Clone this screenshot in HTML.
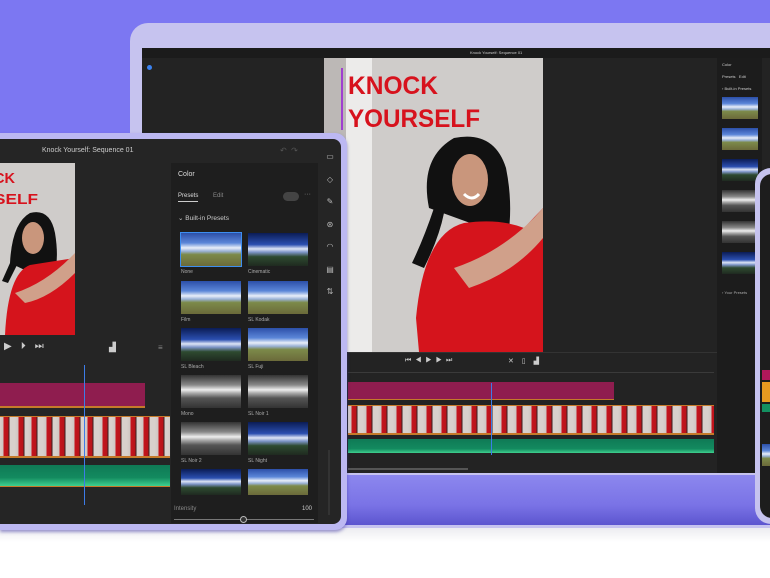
<!DOCTYPE html>
<html><head><meta charset="utf-8"><style>
*{margin:0;padding:0;box-sizing:border-box}
body{width:770px;height:578px;overflow:hidden;background:#fff;font-family:"Liberation Sans",sans-serif;position:relative}
.a{position:absolute}
.thumb{position:absolute;background:linear-gradient(#2c4fa8 0%,#5b86d8 30%,#e8eef8 45%,#9bb3d8 55%,#7c8a4a 65%,#6b6a3a 100%)}
.bw{background:linear-gradient(#333 0%,#888 30%,#eee 45%,#aaa 55%,#555 70%,#333 100%)}
.dk{background:linear-gradient(#0b1c55 0%,#2b4fb0 35%,#dde5f5 48%,#7f96c9 58%,#2e4a30 72%,#1f2a20 100%)}
.lbl{position:absolute;color:#aaa;font-size:5px}
.film{background:repeating-linear-gradient(90deg,#d8d0cc 0,#cfc6c2 3px,#c3141c 4px,#b8141a 8px,#3a2222 9px,#d8d0cc 10px,#d8d0cc 15px)}
</style></head><body>
<div class="a" style="left:0;top:0;width:770px;height:530px;background:#7c77f2"></div>
<div class="a" style="left:0;top:528px;width:770px;height:50px;background:linear-gradient(#ececf0,#fff 14px)"></div>

<!-- laptop -->
<div class="a" style="left:130px;top:23px;width:660px;height:505px;background:#c6c3ef;border-radius:18px 0 0 0"></div>
<div class="a" style="left:142px;top:475px;width:630px;height:50px;background:linear-gradient(#8c87ee,#7a73e6 60%,#5c55cf)"></div>
<div class="a" style="left:142px;top:48px;width:630px;height:425px;background:#232323"></div>
<div class="a" style="left:142px;top:48px;width:630px;height:10px;background:#1b1b1b"></div>
<div class="a" style="left:470px;top:50px;color:#ccc;font-size:4px">Knock Yourself: Sequence 01</div>
<div class="a" style="left:147px;top:65px;width:5px;height:5px;border-radius:50%;background:#3b82f0"></div>
<div class="a" style="left:717px;top:58px;width:45px;height:415px;background:#1c1c1c"></div>
<div class="a" style="left:722px;top:62px;color:#ccc;font-size:4px">Color</div>
<div class="a" style="left:722px;top:74px;color:#ccc;font-size:4px">Presets &nbsp; Edit</div>
<div class="a" style="left:722px;top:86px;color:#ccc;font-size:4px">› Built-in Presets</div>
<div class="thumb" style="left:722px;top:97px;width:36px;height:22px"></div>
<div class="thumb" style="left:722px;top:128px;width:36px;height:22px"></div>
<div class="thumb dk" style="left:722px;top:159px;width:36px;height:22px"></div>
<div class="thumb bw" style="left:722px;top:190px;width:36px;height:22px"></div>
<div class="thumb bw" style="left:722px;top:221px;width:36px;height:22px"></div>
<div class="thumb dk" style="left:722px;top:252px;width:36px;height:22px"></div>
<div class="a" style="left:722px;top:290px;color:#aaa;font-size:4px">› Your Presets</div>

<!-- laptop video -->
<svg class="a" style="left:324px;top:58px" width="219" height="294" viewBox="0 0 219 294">
<rect width="219" height="294" fill="#cfccca"/>
<rect x="0" width="22" height="294" fill="#bcb8b6"/>
<rect x="22" width="26" height="294" fill="#ecebea"/>
<rect x="17" y="10" width="2" height="62" fill="#a03fd0"/>
<text x="24" y="36" font-family="Liberation Sans" font-weight="bold" font-size="25" fill="#d7121d" textLength="90" lengthAdjust="spacingAndGlyphs">KNOCK</text>
<text x="24" y="69" font-family="Liberation Sans" font-weight="bold" font-size="25" fill="#d7121d" textLength="132" lengthAdjust="spacingAndGlyphs">YOURSELF</text>
<path d="M105 150 Q95 100 130 80 Q170 72 182 110 Q192 160 178 205 L160 170 Z" fill="#111"/>
<ellipse cx="146" cy="122" rx="18" ry="26" fill="#c9967c"/>
<path d="M92 260 Q100 175 140 165 Q175 160 200 170 L219 150 L219 294 L95 294 Z" fill="#d5141c"/>
<path d="M130 210 Q175 195 210 160 L219 150 L219 180 Q190 215 145 230 Z" fill="#d0a08a"/>
<path d="M110 150 Q100 180 88 205 L100 210 Q115 180 120 155 Z" fill="#111"/>
<path d="M140 136 Q148 144 155 136" stroke="#fff" stroke-width="3" fill="none"/>
</svg>
<div class="a" style="left:348px;top:352px;width:369px;height:1px;background:#333"></div>
<div class="a" style="left:405px;top:357px;color:#ccc;font-size:7px;letter-spacing:4px">⏮◀▶▶⏭</div>
<div class="a" style="left:508px;top:357px;color:#ccc;font-size:7px;letter-spacing:3px">✕ ▯ ▟</div>
<div class="a" style="left:348px;top:372px;width:366px;height:1px;background:#3a3a3a"></div>
<div class="a" style="left:348px;top:382px;width:266px;height:18px;background:#8f1d4f;border-bottom:1px solid #c57a2a"></div>
<div class="a film" style="left:348px;top:405px;width:366px;height:30px;border-top:1px solid #c57a2a;border-bottom:2px solid #c57a2a"></div>
<div class="a" style="left:348px;top:439px;width:366px;height:14px;background:linear-gradient(#0f7a55,#138a5f 70%,#3fd08f)"></div>
<div class="a" style="left:348px;top:468px;width:120px;height:2px;background:#555"></div>
<div class="a" style="left:491px;top:383px;width:1px;height:72px;background:#3d7ce8"></div>

<!-- phone -->
<div class="a" style="left:755px;top:168px;width:30px;height:356px;background:#c6c3ef;border-radius:16px 0 0 16px"></div>
<div class="a" style="left:760px;top:174px;width:20px;height:344px;background:#1d1d1d;border-radius:12px 0 0 12px"></div>
<div class="a" style="left:762px;top:370px;width:10px;height:10px;background:#b0185a"></div>
<div class="a" style="left:762px;top:382px;width:10px;height:20px;background:#e69a20"></div>
<div class="a" style="left:762px;top:404px;width:10px;height:8px;background:#139060"></div>
<div class="thumb" style="left:762px;top:444px;width:10px;height:22px"></div>

<!-- tablet -->
<div class="a" style="left:0;top:133px;width:347px;height:397px;background:#bcb8f2;border-radius:0 12px 12px 0;box-shadow:0 2px 3px rgba(60,50,160,.5)"></div>
<div class="a" style="left:0;top:139px;width:341px;height:385px;background:#252525;border-radius:0 8px 8px 0"></div>
<div class="a" style="left:42px;top:147px;color:#ccc;font-size:7px">Knock Yourself: Sequence 01</div>
<div class="a" style="left:280px;top:146px;color:#555;font-size:8px">↶ &nbsp;↷</div>
<svg class="a" style="left:0;top:163px" width="75" height="172" viewBox="0 0 75 172">
<rect width="75" height="172" fill="#cfccca"/>
<text x="-6" y="20" font-family="Liberation Sans" font-weight="bold" font-size="15" fill="#d7121d" textLength="21" lengthAdjust="spacingAndGlyphs">CK</text>
<text x="-6" y="41" font-family="Liberation Sans" font-weight="bold" font-size="15" fill="#d7121d" textLength="44" lengthAdjust="spacingAndGlyphs">SELF</text>
<path d="M10 100 Q12 60 30 50 Q50 45 55 70 Q60 100 52 120 Z" fill="#111"/>
<ellipse cx="33" cy="75" rx="11" ry="16" fill="#c9967c"/>
<path d="M5 172 Q8 110 30 102 Q55 98 75 95 L75 172 Z" fill="#d5141c"/>
<path d="M15 130 Q45 120 70 95 L75 90 L75 110 Q50 135 25 140 Z" fill="#d0a08a"/>
<path d="M10 100 L2 118 L8 120 L18 100Z" fill="#111"/>
</svg>
<div class="a" style="left:4px;top:341px;color:#ccc;font-size:10px;letter-spacing:9px">▶⏵⏭</div>
<div class="a" style="left:109px;top:342px;color:#ccc;font-size:9px">▟</div>
<div class="a" style="left:158px;top:343px;color:#888;font-size:8px">≡</div>
<div class="a" style="left:0;top:383px;width:145px;height:25px;background:#8f1d4f;border-bottom:2px solid #c57a2a"></div>
<div class="a film" style="left:0;top:416px;width:170px;height:42px;background-size:28px 100%;border-top:1px solid #c57a2a;border-bottom:2px solid #c57a2a"></div>
<div class="a" style="left:0;top:465px;width:170px;height:22px;background:linear-gradient(#0f7a55,#138a5f 60%,#3fd08f);border-bottom:1px solid #c57a2a"></div>
<div class="a" style="left:84px;top:365px;width:1px;height:140px;background:#3d7ce8"></div>
<!-- tablet panel -->
<div class="a" style="left:171px;top:163px;width:147px;height:360px;background:#1e1e1e"></div>
<div class="a" style="left:178px;top:171px;color:#ddd;font-size:7px">Color</div>
<div class="a" style="left:178px;top:193px;color:#ddd;font-size:6px;border-bottom:1px solid #ccc;padding-bottom:2px">Presets</div>
<div class="a" style="left:213px;top:193px;color:#888;font-size:6px">Edit</div>
<div class="a" style="left:283px;top:192px;width:16px;height:9px;border-radius:5px;background:#444"></div>
<div class="a" style="left:304px;top:191px;color:#888;font-size:7px">···</div>
<div class="a" style="left:178px;top:214px;color:#ccc;font-size:6.5px">⌄ Built-in Presets</div>
<div class="thumb" style="left:181px;top:233px;width:60px;height:33px;outline:1px solid #3d8ef0"></div>
<div class="thumb dk" style="left:248px;top:233px;width:60px;height:33px"></div>
<div class="lbl" style="left:181px;top:269px">None</div><div class="lbl" style="left:248px;top:269px">Cinematic</div>
<div class="thumb" style="left:181px;top:281px;width:60px;height:33px"></div>
<div class="thumb" style="left:248px;top:281px;width:60px;height:33px"></div>
<div class="lbl" style="left:181px;top:317px">Film</div><div class="lbl" style="left:248px;top:317px">SL Kodak</div>
<div class="thumb dk" style="left:181px;top:328px;width:60px;height:33px"></div>
<div class="thumb" style="left:248px;top:328px;width:60px;height:33px"></div>
<div class="lbl" style="left:181px;top:364px">SL Bleach</div><div class="lbl" style="left:248px;top:364px">SL Fuji</div>
<div class="thumb bw" style="left:181px;top:375px;width:60px;height:33px"></div>
<div class="thumb bw" style="left:248px;top:375px;width:60px;height:33px"></div>
<div class="lbl" style="left:181px;top:411px">Mono</div><div class="lbl" style="left:248px;top:411px">SL Noir 1</div>
<div class="thumb bw" style="left:181px;top:422px;width:60px;height:33px"></div>
<div class="thumb dk" style="left:248px;top:422px;width:60px;height:33px"></div>
<div class="lbl" style="left:181px;top:458px">SL Noir 2</div><div class="lbl" style="left:248px;top:458px">SL Night</div>
<div class="thumb dk" style="left:181px;top:469px;width:60px;height:26px"></div>
<div class="thumb" style="left:248px;top:469px;width:60px;height:26px"></div>
<div class="a" style="left:174px;top:506px;color:#888;font-size:6px">Intensity</div>
<div class="a" style="left:302px;top:506px;color:#ccc;font-size:6px">100</div>
<div class="a" style="left:174px;top:519px;width:140px;height:1px;background:#777"></div>
<div class="a" style="left:240px;top:516px;width:7px;height:7px;border-radius:50%;border:1px solid #bbb;background:#333"></div>
<div class="a" style="left:328px;top:450px;width:2px;height:65px;background:#333"></div>
<div class="a" style="left:324px;top:146px;color:#bbb;font-size:8px;line-height:22.5px;text-align:center;width:12px">▭<br>◇<br>✎<br>⊛<br>◠<br>▤<br>⇅</div>
</body></html>
